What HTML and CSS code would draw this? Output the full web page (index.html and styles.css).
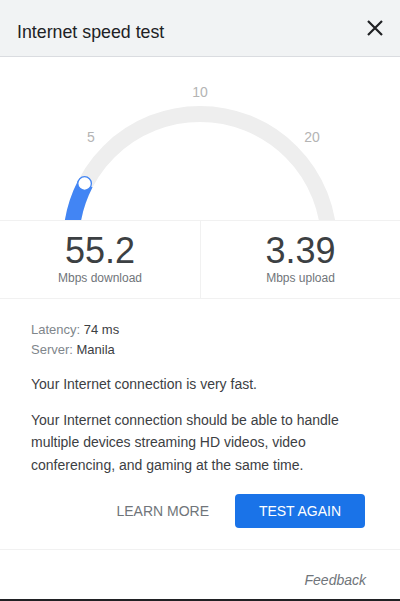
FILE: index.html
```html
<!DOCTYPE html>
<html lang="en">
<head>
<meta charset="utf-8">
<title>Internet speed test</title>
<link rel="stylesheet" href="styles.css">
</head>
<body>
<div class="panel">
  <header class="header">
    <h1 class="title">Internet speed test</h1>
    <button class="close" aria-label="Close">
      <svg width="16" height="16" viewBox="0 0 16 16"><path d="M1 1 L15 15 M15 1 L1 15" stroke="#202124" stroke-width="2.2" fill="none"/></svg>
    </button>
  </header>
  <div class="gauge">
    <svg class="gauge-svg" width="400" height="163" viewBox="0 0 400 163">
      <path d="M71 186 A129 129 0 0 1 329 186" stroke="#eeeeee" stroke-width="16" fill="none"/>
      <path d="M71 186 A129 129 0 0 1 85.4 126.7" stroke="#4285f4" stroke-width="16" fill="none"/>
      <circle cx="84.6" cy="126.5" r="6.8" fill="#ffffff" stroke="#4285f4" stroke-width="1.3"/>
      <text class="tick" x="200" y="40" text-anchor="middle">10</text>
      <text class="tick" x="91" y="85" text-anchor="middle">5</text>
      <text class="tick" x="312" y="85" text-anchor="middle">20</text>
    </svg>
  </div>
  <div class="results">
    <div class="result">
      <div class="value">55.2</div>
      <div class="unit">Mbps download</div>
    </div>
    <div class="result">
      <div class="value">3.39</div>
      <div class="unit">Mbps upload</div>
    </div>
  </div>
  <div class="info">
    <div class="meta">
      <div><span class="label">Latency:</span> 74 ms</div>
      <div><span class="label">Server:</span> Manila</div>
    </div>
    <p class="summary">Your Internet connection is very fast.</p>
    <p class="desc">Your Internet connection should be able to handle multiple devices streaming HD videos, video conferencing, and gaming at the same time.</p>
    <div class="actions">
      <button class="btn-text">LEARN MORE</button>
      <button class="btn-primary">TEST AGAIN</button>
    </div>
  </div>
  <footer class="footer">
    <span class="feedback">Feedback</span>
  </footer>
</div>
</body>
</html>
```
FILE: styles.css
```css
* { box-sizing: border-box; }
html, body {
  margin: 0;
  padding: 0;
  background: #ffffff;
}
body {
  font-family: "Liberation Sans", Arial, sans-serif;
  color: #202124;
}
.panel {
  width: 400px;
  height: 601px;
  display: flex;
  flex-direction: column;
  border-bottom: 2px solid #202124;
}
.header {
  height: 57px;
  background: #f1f3f4;
  border-bottom: 1px solid #dadce0;
  display: flex;
  align-items: center;
  justify-content: space-between;
  padding: 0 17px 0 17px;
}
.title {
  margin: 0;
  font-size: 17.8px;
  font-weight: normal;
  color: #202124;
  padding-top: 9px;
}
.close {
  border: 0;
  background: none;
  padding: 0;
  width: 16px;
  height: 16px;
  display: flex;
}
.gauge {
  height: 163px;
  overflow: hidden;
}
.gauge-svg { display: block; }
.tick {
  font-family: "Liberation Sans", Arial, sans-serif;
  font-size: 14px;
  fill: #b4b4b4;
}
.results {
  display: grid;
  grid-template-columns: 1fr 1fr;
  border-top: 1px solid #f1f1f1;
  border-bottom: 1px solid #f1f1f1;
}
.result {
  text-align: center;
  padding: 10px 0 13px;
}
.result + .result {
  border-left: 1px solid #f1f1f1;
}
.value {
  font-size: 36px;
  line-height: 40px;
  color: #3c4043;
}
.unit {
  font-size: 12px;
  line-height: 14px;
  color: #70757a;
}
.info {
  padding: 21px 35px 0 31px;
}
.meta {
  font-size: 13px;
  line-height: 20px;
  color: #3c4043;
}
.label { color: #80868b; }
.summary {
  margin: 13px 0 0;
  font-size: 14px;
  line-height: 22px;
  color: #3c4043;
}
.desc {
  margin: 14px 0 0;
  font-size: 14px;
  line-height: 22.3px;
  color: #3c4043;
}
.actions {
  display: flex;
  justify-content: flex-end;
  align-items: center;
  gap: 26px;
  margin-top: 18px;
}
.btn-text {
  border: 0;
  background: none;
  padding: 0;
  font-family: "Liberation Sans", Arial, sans-serif;
  font-size: 14px;
  color: #70757a;
}
.btn-primary {
  border: 0;
  border-radius: 4px;
  background: #1a73e8;
  color: #ffffff;
  font-family: "Liberation Sans", Arial, sans-serif;
  font-size: 14px;
  height: 34px;
  width: 130px;
  padding: 0;
}
.footer {
  margin-top: auto;
  border-top: 1px solid #f1f1f1;
  height: 50px;
  display: flex;
  justify-content: flex-end;
  padding: 19px 34px 0 0;
}
.feedback {
  font-size: 14px;
  line-height: 22px;
  font-style: italic;
  color: #70757a;
}
```
